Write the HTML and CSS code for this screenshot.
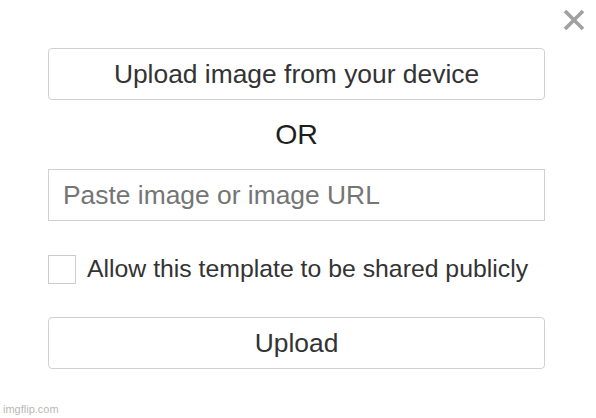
FILE: index.html
```html
<!DOCTYPE html>
<html>
<head>
<meta charset="utf-8">
<link rel="stylesheet" href="styles.css">
</head>
<body>
<div class="modal">
  <button class="close" aria-label="Close">
    <svg width="24" height="24" viewBox="0 0 24 24"><path d="M3 3 L21 21 M21 3 L3 21" stroke="#a0a0a0" stroke-width="3.6" stroke-linecap="butt"/></svg>
  </button>
  <div class="content">
    <button class="btn">Upload image from your device</button>
    <div class="or">OR</div>
    <input class="url" type="text" placeholder="Paste image or image URL">
    <label class="check"><span class="box"></span><span>Allow this template to be shared publicly</span></label>
    <button class="btn">Upload</button>
  </div>
  <div class="wm">imgflip.com</div>
</div>
</body>
</html>
```
FILE: styles.css
```css
html, body { margin: 0; padding: 0; background: #fff; }
body { font-family: "Liberation Sans", Arial, sans-serif; color: #222; }
.modal { position: relative; width: 596px; height: 418px; box-sizing: border-box; padding: 48px 51px 0 48px; }
.close { position: absolute; top: 7px; right: 9px; width: 26px; height: 26px; padding: 1px; border: 0; background: none; }
.content { display: flex; flex-direction: column; }
.btn { height: 52px; box-sizing: border-box; border: 1px solid #d0d0d0; border-radius: 4px; background: #fff; font-family: "Liberation Sans", Arial, sans-serif; font-size: 26.4px; color: #333; padding: 0; }
.or { height: 69px; display: flex; align-items: center; justify-content: center; font-size: 28.5px; color: #1e1e1e; }
.url { height: 52px; box-sizing: border-box; border: 1px solid #d0d0d0; border-radius: 0; padding: 0 14px; font-family: "Liberation Sans", Arial, sans-serif; font-size: 26.4px; color: #333; outline: none; }
.url::placeholder { color: #757575; }
.check { display: flex; align-items: center; gap: 11px; margin-top: 33px; height: 30px; font-size: 24.8px; color: #333; }
.box { width: 28px; height: 29px; box-sizing: border-box; border: 1px solid #ccc; background: #fff; }
.check + .btn { margin-top: 33px; }
.wm { position: absolute; left: 3px; bottom: 3px; font-size: 11px; color: #b8b8b8; }
```
